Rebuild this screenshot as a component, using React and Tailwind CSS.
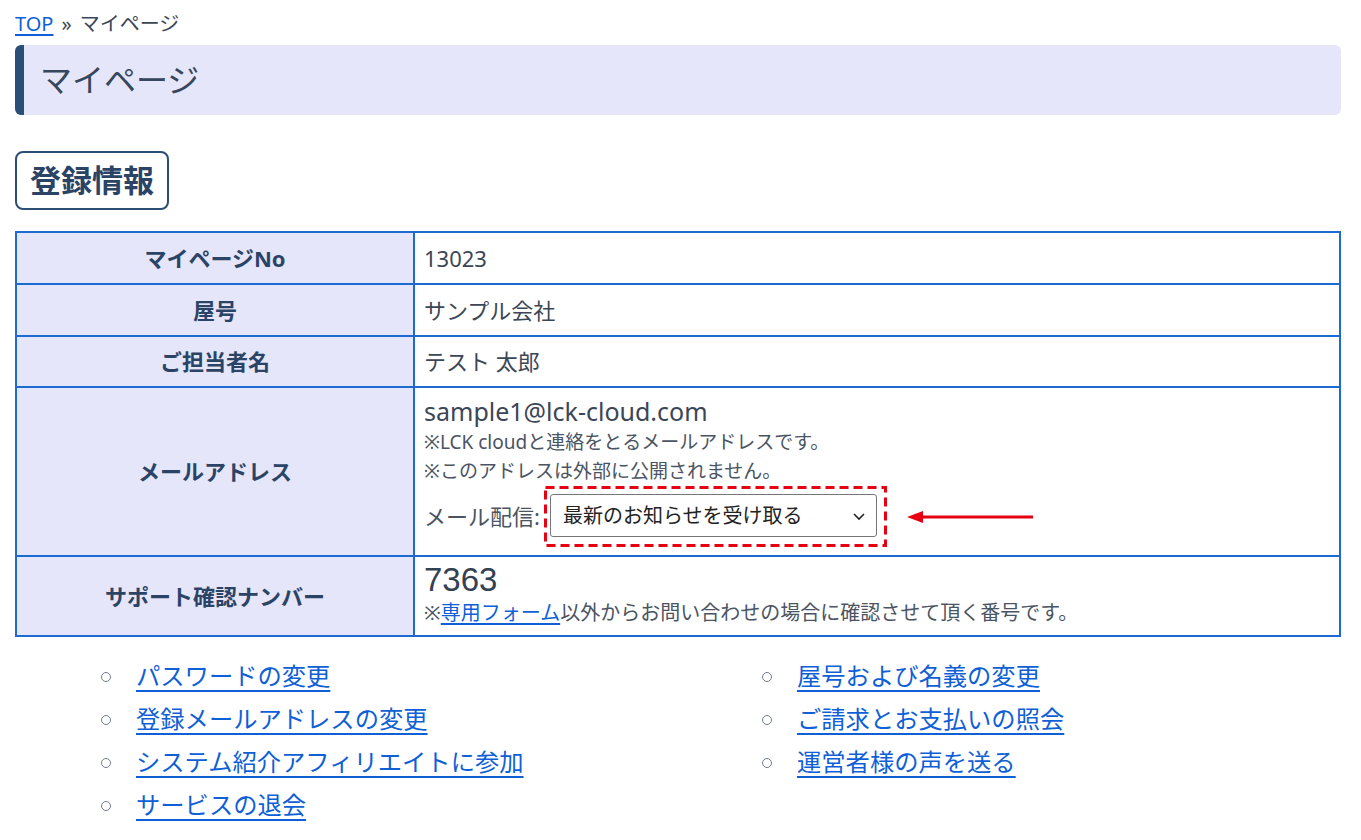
import React from "react";

const font = { fontFamily: '"Noto Sans", "Noto Sans CJK JP", sans-serif' };

const leftLinks = [
  "パスワードの変更",
  "登録メールアドレスの変更",
  "システム紹介アフィリエイトに参加",
  "サービスの退会",
];

const rightLinks = ["屋号および名義の変更", "ご請求とお支払いの照会", "運営者様の声を送る"];

// one row of the info table (height includes the top border)
const Row = ({ label, children, h, top = true }) => (
  <div className={`flex ${top ? "border-t-2 border-[#1d6ad2]" : ""}`} style={{ height: h }}>
    <div className="w-[398px] shrink-0 bg-[#e6e6fa] border-r-2 border-[#1d6ad2] flex items-center justify-center text-[22px] font-bold text-[#2b4466]">
      {label}
    </div>
    <div className="flex-1 px-[9px] flex flex-col justify-center text-[#3b4656]">{children}</div>
  </div>
);

const LinkList = ({ items, right }) => (
  <ul className="flex flex-col">
    {items.map((t) => (
      <li key={t} className="flex items-center h-[43px]">
        <span
          className={`w-[10px] h-[10px] rounded-full border-[1.5px] border-[#6e7d92] mr-[25px] ${right ? "ml-[84px]" : "ml-[86px]"}`}
        />
        <a href="#" className="text-[24.3px] text-[#0f5fd6] underline underline-offset-[5px] decoration-[1.5px]">
          {t}
        </a>
      </li>
    ))}
  </ul>
);

const App = () => {
  return (
    <div className="min-h-screen bg-white pl-[15px] pr-[20px] pt-[8px]" style={font}>
      {/* breadcrumb */}
      <div className="text-[20px] leading-[32px] text-[#3b4656]">
        <a href="#" className="text-[#0f5fd6] underline underline-offset-[3px]">TOP</a>
        <span className="mx-[8px]">»</span>
        マイページ
      </div>

      {/* page title */}
      <div className="mt-[5px] h-[70px] bg-[#e6e6fa] rounded-[6px] border-l-[9px] border-[#2c4e76] flex items-center pl-[16px]">
        <h1 className="text-[32px] text-[#36475b]">マイページ</h1>
      </div>

      {/* section title */}
      <div className="mt-[36px] inline-flex items-center h-[59px] px-[13px] border-2 border-[#2c4e76] rounded-[8px]">
        <h2 className="text-[31px] font-bold text-[#2b4466]">登録情報</h2>
      </div>

      {/* table */}
      <div className="mt-[21px] border-2 border-[#1d6ad2]">
        <Row label="マイページNo" h={50} top={false}>
          <span className="text-[22px]">13023</span>
        </Row>
        <Row label="屋号" h={52}>
          <span className="text-[22px]">サンプル会社</span>
        </Row>
        <Row label="ご担当者名" h={51}>
          <span className="text-[22px]">テスト 太郎</span>
        </Row>
        <Row label="メールアドレス" h={169}>
          <div className="flex flex-col justify-start h-full pt-[6px]">
            <div className="text-[25px] leading-[34px]">sample1@lck-cloud.com</div>
            <div className="text-[19px] leading-[29px] text-[#4a5463]">※LCK cloudと連絡をとるメールアドレスです。</div>
            <div className="text-[19px] leading-[29px] text-[#4a5463]">※このアドレスは外部に公開されません。</div>
            <div className="flex items-center">
              <span className="text-[22px] text-[#4a5463]">メール配信:</span>
              <div className="relative ml-[4px] w-[343px] h-[61px] pl-[6px] pr-[10px] py-[8px]">
                <svg className="absolute inset-0" width="343" height="61" viewBox="0 0 343 61" fill="none">
                  <rect x="1.5" y="1.5" width="340" height="58" stroke="#e60012" strokeWidth="3" strokeDasharray="9 5" />
                </svg>
                <div className="w-[327px] h-[43px] border border-[#767676] rounded-[3px] bg-white flex items-center justify-between pl-[12px] pr-[10px]">
                  <span className="text-[20px] text-[#222]">最新のお知らせを受け取る</span>
                  <svg width="14" height="14" viewBox="0 0 14 14" fill="none" stroke="#222" strokeWidth="1.6">
                    <path d="M2 5l5 5 5-5" />
                  </svg>
                </div>
              </div>
              <svg className="ml-[20px]" width="126" height="16" viewBox="0 0 126 16">
                <path d="M14 8H126" stroke="#e60012" strokeWidth="3" />
                <path d="M0 8L16 2V14Z" fill="#e60012" />
              </svg>
            </div>
          </div>
        </Row>
        <Row label="サポート確認ナンバー" h={80}>
          <div className="flex flex-col justify-start h-full pt-[4px]">
            <div
              className="text-[33px] leading-[37px] text-[#344152]"
              style={{ fontFamily: '"Liberation Sans", sans-serif' }}
            >
              7363
            </div>
            <div className="text-[20px] leading-[29px] text-[#4a5463]">
              ※<a href="#" className="text-[#0f5fd6] underline underline-offset-[3px]">専用フォーム</a>以外からお問い合わせの場合に確認させて頂く番号です。
            </div>
          </div>
        </Row>
      </div>

      {/* links */}
      <div className="grid grid-cols-2 mt-[18px] pb-[10px]">
        <LinkList items={leftLinks} />
        <LinkList items={rightLinks} right />
      </div>
    </div>
  );
};

export default App;
